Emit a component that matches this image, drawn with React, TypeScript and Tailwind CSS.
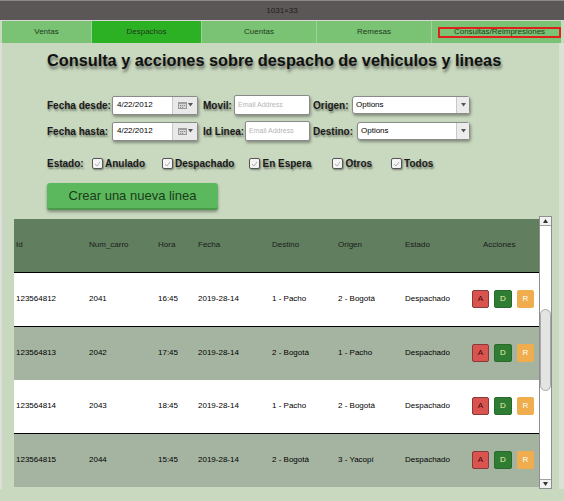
import React from "react";

const rows = [
  { id: "123564812", car: "2041", hora: "16:45", fecha: "2019-28-14", dest: "1 - Pacho", orig: "2 - Bogotá", white: true, top: true },
  { id: "123564813", car: "2042", hora: "17:45", fecha: "2019-28-14", dest: "2 - Bogotá", orig: "1 - Pacho", white: false, top: true },
  { id: "123564814", car: "2043", hora: "18:45", fecha: "2019-28-14", dest: "1 - Pacho", orig: "2 - Bogotá", white: true, top: false },
  { id: "123564815", car: "2044", hora: "15:45", fecha: "2019-28-14", dest: "2 - Bogotá", orig: "3 - Yacopí", white: false, top: true },
];

const lbl = "whitespace-nowrap text-[10px] font-bold text-[#1a1a1a] [text-shadow:1px_2px_2px_rgba(0,0,0,0.45)]";

function DateInput() {
  return (
    <div className="flex h-[19px] w-[86px] shrink-0 rounded-[2px] border border-[#8a8a8a] bg-white shadow-[1px_2px_3px_rgba(0,0,0,0.35)]">
      <div className="flex flex-1 items-center pl-[4px] text-[8px] text-black">4/22/2012</div>
      <div className="flex w-[25px] items-center justify-center gap-[1px] border-l border-[#c8c8c8] bg-[#e9e9e9]">
        <svg width="9" height="8" viewBox="0 0 9 8">
          <rect x="0.5" y="1.5" width="8" height="6" fill="#d8d8d8" stroke="#9a9a9a" />
          <rect x="0.5" y="1.5" width="8" height="1.5" fill="#a0a0a0" />
          <rect x="2" y="4" width="1.2" height="1" fill="#888" />
          <rect x="4" y="4" width="1.2" height="1" fill="#888" />
          <rect x="6" y="4" width="1.2" height="1" fill="#888" />
          <rect x="2" y="5.8" width="1.2" height="1" fill="#888" />
          <rect x="4" y="5.8" width="1.2" height="1" fill="#888" />
        </svg>
        <svg width="5" height="4" viewBox="0 0 5 4">
          <path d="M0 0 L5 0 L2.5 3.5 Z" fill="#555" />
        </svg>
      </div>
    </div>
  );
}

function TextInput({ w }: { w: string }) {
  return (
    <div className={`flex h-[20px] ${w} shrink-0 items-center whitespace-nowrap rounded-[2px] border border-[#8a8a8a] bg-white pl-[3px] text-[7px] text-[#b5b5b5] shadow-[1px_2px_3px_rgba(0,0,0,0.35)]`}>
      Email Address
    </div>
  );
}

function Select({ w }: { w: string }) {
  return (
    <div className={`flex h-[18px] ${w} shrink-0 rounded-[3px] border border-[#8a8a8a] bg-white shadow-[1px_2px_3px_rgba(0,0,0,0.35)]`}>
      <div className="flex flex-1 items-center pl-[3px] text-[8px] text-black">Options</div>
      <div className="flex w-[13px] items-center justify-center border-l border-[#c8c8c8] bg-[#ececec]">
        <svg width="5" height="4" viewBox="0 0 5 4">
          <path d="M0 0 L5 0 L2.5 3.5 Z" fill="#555" />
        </svg>
      </div>
    </div>
  );
}

function Check({ label, ml }: { label: string; ml: string }) {
  return (
    <div className={`flex items-center ${ml}`}>
      <div className="flex h-[11px] w-[11px] items-center justify-center rounded-[2px] border border-[#555] bg-[#f4f4f4] shadow-[1px_1px_2px_rgba(0,0,0,0.4)]">
        <svg width="7" height="6" viewBox="0 0 7 6">
          <path d="M1 3 L3 5 L6 1" fill="none" stroke="#b0b0b0" strokeWidth="1" />
        </svg>
      </div>
      <span className={`ml-[2px] ${lbl}`}>{label}</span>
    </div>
  );
}

export default function App() {
  const cols = "grid grid-cols-[73px_69px_40px_74px_66px_67px_67px_1fr] pl-[2px]";
  return (
    <div className="relative h-[501px] w-[564px] overflow-hidden bg-[#c9d9bf] font-['Liberation_Sans',Arial,sans-serif]">
      {/* top bar */}
      <div className="flex h-[20px] items-center justify-center border-t border-[#8c8888] bg-[#5b5757] text-[8px] text-[#1c1c1c]">
        1031×33
      </div>
      <div className="h-[1px] bg-[#d8d8d8]" />
      {/* tabs */}
      <div className="flex h-[22px] pl-[2px] pr-[3px] text-[8px] text-[#1e3a1c]">
        <div className="flex w-[90px] items-center justify-center border-r border-[#9ed29a] bg-[#7ac374]">Ventas</div>
        <div className="flex w-[110px] items-center justify-center border-r border-[#9ed29a] bg-[#2db124]">Despachos</div>
        <div className="flex w-[115px] items-center justify-center border-r border-[#9ed29a] bg-[#7ac374]">Cuentas</div>
        <div className="flex w-[115px] items-center justify-center border-r border-[#9ed29a] bg-[#7ac374]">Remesas</div>
        <div className="flex flex-1 items-center justify-end bg-[#7ac374]">
          <div className="flex h-[11px] w-[123px] items-center justify-center border-2 border-[#e0201b]">
            Consultas/Reimpresiones
          </div>
        </div>
      </div>
      {/* body */}
      <div className="flex border-l-2 border-[#dde0da]">
        <div className="w-[557px]">
          <h1 className="mt-[6px] whitespace-nowrap pl-[45px] text-[16.3px] font-bold leading-[22px] text-[#111] [text-shadow:1px_3px_3px_rgba(0,0,0,0.5)]">
            Consulta y acciones sobre despacho de vehiculos y lineas
          </h1>

          <div className="mt-[24px] pl-[45px]">
            <div className="flex items-center">
              <span className={`w-[65px] ${lbl}`}>Fecha desde:</span>
              <DateInput />
              <span className={`ml-[5px] w-[31px] ${lbl}`}>Movil:</span>
              <TextInput w="w-[76px]" />
              <span className={`ml-[3px] w-[39px] ${lbl}`}>Origen:</span>
              <Select w="w-[118px]" />
            </div>
            <div className="mt-[6px] flex items-center">
              <span className={`w-[65px] ${lbl}`}>Fecha hasta:</span>
              <DateInput />
              <span className={`ml-[5px] w-[42px] ${lbl}`}>Id Linea:</span>
              <TextInput w="w-[65px]" />
              <span className={`ml-[3px] w-[44px] ${lbl}`}>Destino:</span>
              <Select w="w-[113px]" />
            </div>
            <div className="mt-[15px] flex items-center">
              <span className={`w-[45px] ${lbl}`}>Estado:</span>
              <Check label="Anulado" ml="ml-0" />
              <Check label="Despachado" ml="ml-[17px]" />
              <Check label="En Espera" ml="ml-[15px]" />
              <Check label="Otros" ml="ml-[21px]" />
              <Check label="Todos" ml="ml-[19px]" />
            </div>
            <button className="mt-[12px] flex h-[27px] w-[171px] items-center justify-center rounded-[3px] border-b-2 border-[#4a9a4a] bg-[#5cb85c] text-[13px] text-[#1b3b1b] shadow-[0_2px_3px_rgba(0,0,0,0.35)]">
              Crear una nueva linea
            </button>
          </div>

          {/* table + scrollbar */}
          <div className="mt-[6px] flex items-center pl-[12px]">
            <div className="w-[525px] text-[8px] text-black">
              <div className={`${cols} h-[53px] items-center bg-[#617f5f] text-[#1a1a1a]`}>
                <div>Id</div>
                <div>Num_carro</div>
                <div>Hora</div>
                <div>Fecha</div>
                <div>Destino</div>
                <div>Origen</div>
                <div>Estado</div>
                <div className="pl-[11px]">Acciones</div>
              </div>
              {rows.map((r) => (
                <div
                  key={r.id}
                  className={`${cols} items-center ${r.white ? "bg-white" : "bg-[#a5b4a0]"} ${r.top ? "h-[54px] border-t border-black" : "h-[53px]"}`}
                >
                  <div>{r.id}</div>
                  <div>{r.car}</div>
                  <div>{r.hora}</div>
                  <div>{r.fecha}</div>
                  <div>{r.dest}</div>
                  <div>{r.orig}</div>
                  <div>Despachado</div>
                  <div className="flex gap-[5px]">
                    <div className="flex h-[18px] w-[17px] items-center justify-center rounded-[2px] border border-[#8a3a38] bg-[#d9534f] text-[#3a0a0a]">A</div>
                    <div className="flex h-[18px] w-[18px] items-center justify-center rounded-[2px] border border-[#2a6a2c] bg-[#2e7d32] text-[#f0f0b0]">D</div>
                    <div className="flex h-[18px] w-[17px] items-center justify-center rounded-[2px] bg-[#f0ad4e] text-white">R</div>
                  </div>
                </div>
              ))}
            </div>
            <div className="flex h-[273px] w-[13px] flex-col border border-[#8e8e8e] bg-white">
              <div className="flex h-[9px] items-center justify-center border-b border-[#a0a0a0] bg-[#f2f2f2]">
                <svg width="5" height="4" viewBox="0 0 5 4"><path d="M0 4 L5 4 L2.5 0 Z" fill="#333" /></svg>
              </div>
              <div className="h-[83px]" />
              <div className="h-[82px] rounded-t-[6px] rounded-b-[6px] border border-[#a8a8a8] bg-[#e4e4e4]" />
              <div className="flex-1" />
              <div className="flex h-[9px] items-center justify-center border-t border-[#a0a0a0] bg-[#f2f2f2]">
                <svg width="5" height="4" viewBox="0 0 5 4"><path d="M0 0 L5 0 L2.5 4 Z" fill="#333" /></svg>
              </div>
            </div>
          </div>
        </div>
        <div className="flex-1 bg-[#d9e2d3]" />
      </div>
    </div>
  );
}
